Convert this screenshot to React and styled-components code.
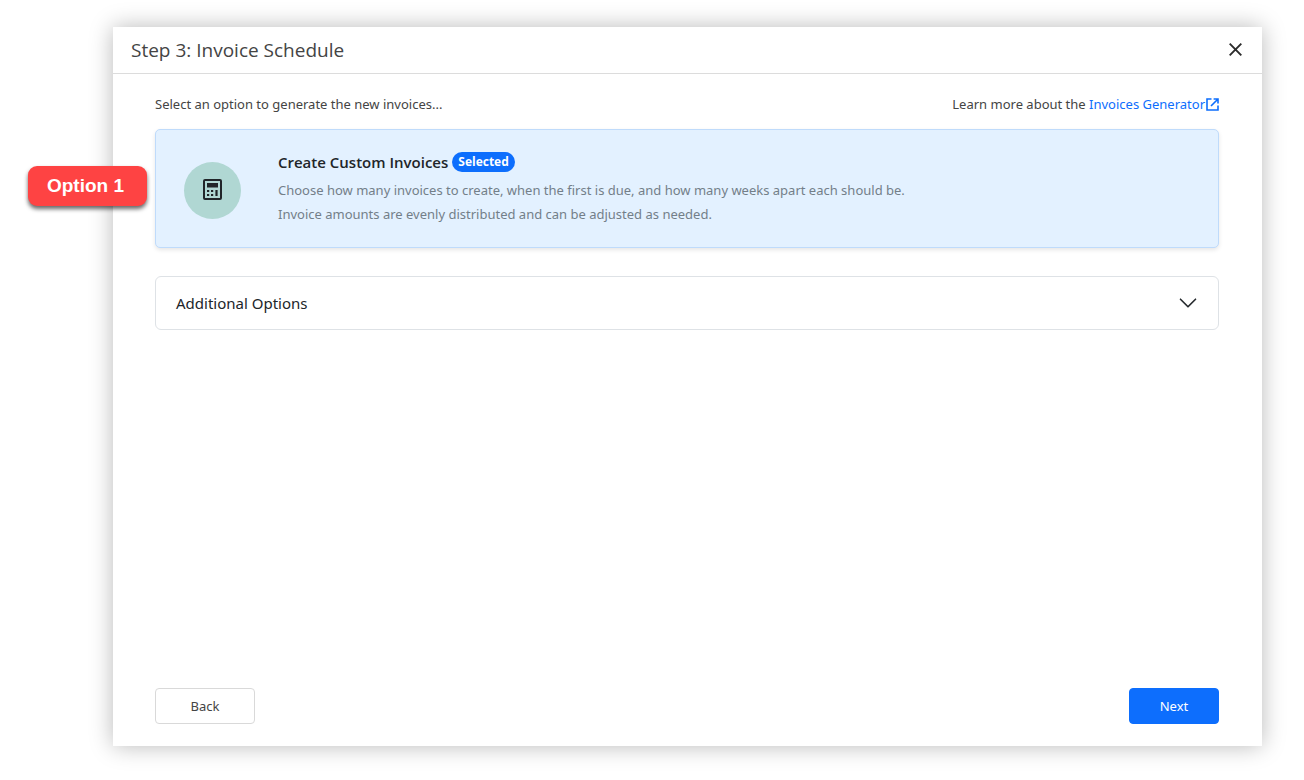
import React, { useState } from "react";
import styled, { createGlobalStyle } from "styled-components";

const headingFont = '"Segoe UI", "Open Sans", sans-serif'
const bodyFont = '"Segoe UI", "Noto Sans", sans-serif'

const CalculatorIcon = () => (
    <svg width="19" height="21" viewBox="0 0 19 21" fill="#212529" aria-hidden="true">
        <rect x="1" y="1" width="17" height="19" rx="1" fill="none" stroke="#212529" strokeWidth="2" />
        <rect x="4" y="4" width="11" height="4.5" />
        <rect x="4" y="11" width="2.2" height="2" />
        <rect x="8" y="11" width="2.2" height="2" />
        <rect x="12.4" y="11" width="2.2" height="6" />
        <rect x="4" y="15" width="2.2" height="2" />
        <rect x="8" y="15" width="2.2" height="2" />
    </svg>
)

const ExternalIcon = () => (
    <svg width="13" height="13" viewBox="0 0 13 13" fill="none" stroke="currentColor" strokeWidth="1.6" aria-hidden="true">
        <path d="M5.5 1H1v11h11V7.5" />
        <path d="M7.6 1H12v4.4M12 1L5 8" />
    </svg>
)

const CloseIcon = () => (
    <svg width="13" height="13" viewBox="0 0 13 13" fill="none" stroke="#2b2b2b" strokeWidth="1.9" aria-hidden="true">
        <path d="M.7.7l11.6 11.6M12.3.7L.7 12.3" />
    </svg>
)

const ChevronIcon = ({ open }) => (
    <StyledChevron width="20" height="20" viewBox="0 0 16 16" fill="#212529" $open={open} aria-hidden="true">
        <path
            fillRule="evenodd"
            stroke="#212529"
            strokeWidth=".2"
            d="M1.646 4.646a.5.5 0 0 1 .708 0L8 10.293l5.646-5.647a.5.5 0 0 1 .708.708l-6 6a.5.5 0 0 1-.708 0l-6-6a.5.5 0 0 1 0-.708z"
        />
    </StyledChevron>
)

const App = () => {
    const [ expanded, setExpanded ] = useState(false)

    return (
        <StyledPage>
            <GlobalStyle />
            <StyledModal role="dialog" aria-labelledby="modal-title">
                <StyledHeader>
                    <StyledTitle id="modal-title">Step 3: Invoice Schedule</StyledTitle>
                    <StyledClose type="button" aria-label="Close">
                        <CloseIcon />
                    </StyledClose>
                </StyledHeader>
                <StyledBody>
                    <StyledIntro>
                        <span>Select an option to generate the new invoices...</span>
                        <span>
                            Learn more about the{' '}
                            <StyledLink href="#invoices-generator">
                                Invoices Generator
                                <ExternalIcon />
                            </StyledLink>
                        </span>
                    </StyledIntro>
                    <StyledOption>
                        <StyledCallout>Option 1</StyledCallout>
                        <StyledIconCircle>
                            <CalculatorIcon />
                        </StyledIconCircle>
                        <div>
                            <StyledOptionTitle>
                                Create Custom Invoices
                                <StyledBadge>Selected</StyledBadge>
                            </StyledOptionTitle>
                            <StyledOptionText>
                                Choose how many invoices to create, when the first is due, and how many weeks apart each should be.
                                <br />
                                Invoice amounts are evenly distributed and can be adjusted as needed.
                            </StyledOptionText>
                        </div>
                    </StyledOption>
                    <StyledAccordion type="button" aria-expanded={expanded} onClick={() => setExpanded(!expanded)}>
                        Additional Options
                        <ChevronIcon open={expanded} />
                    </StyledAccordion>
                </StyledBody>
                <StyledFooter>
                    <StyledButton type="button" $width="100px">Back</StyledButton>
                    <StyledButton type="button" $width="90px" $primary>Next</StyledButton>
                </StyledFooter>
            </StyledModal>
        </StyledPage>
    )
}

export default App

const GlobalStyle = createGlobalStyle`
    *, *::before, *::after {
        box-sizing: border-box;
    }

    body {
        margin: 0;
        background-color: #fff;
        color: #444;
        font-family: ${bodyFont};
        font-size: 13px;
        line-height: 24px;
    }

    button {
        font-family: inherit;
        cursor: pointer;
    }
`

const StyledPage = styled.main`
    display: flex;
    min-height: 100vh;
    padding: 27px 42px 34px 113px;
`

const StyledModal = styled.section`
    display: flex;
    flex-direction: column;
    flex: 1;
    background-color: #fff;
    box-shadow: 0 0 22px rgba(0, 0, 0, 0.28);
`

const StyledHeader = styled.header`
    display: flex;
    justify-content: space-between;
    align-items: center;
    height: 47px;
    padding: 0 18px;
    border-bottom: 1px solid #dcdcdc;
`

const StyledTitle = styled.h1`
    margin: 0;
    font-family: ${headingFont};
    font-size: 19px;
    font-weight: 400;
`

const StyledClose = styled.button`
    display: flex;
    padding: 2px 2px 4px;
    border: none;
    background-color: transparent;
`

const StyledBody = styled.div`
    flex: 1;
    padding: 18px 43px 0 42px;
`

const StyledIntro = styled.div`
    display: flex;
    justify-content: space-between;
    margin-bottom: 13px;
`

const StyledLink = styled.a`
    display: inline-flex;
    align-items: center;
    gap: 1px;
    color: #0d6efd;
    text-decoration: none;
`

const StyledOption = styled.div`
    position: relative;
    display: flex;
    align-items: flex-start;
    gap: 37px;
    margin-bottom: 28px;
    padding: 20px 28px 21px;
    border: 1px solid #bfdbfb;
    border-radius: 5px;
    background-color: #e3f1ff;
    box-shadow: 0 2px 4px rgba(0, 0, 0, 0.1);
`

const StyledCallout = styled.div`
    position: absolute;
    top: 36px;
    left: -128px;
    width: 119px;
    padding-right: 4px;
    border-radius: 9px;
    background-color: #fe4343;
    box-shadow: 0 3px 4px rgba(0, 0, 0, 0.6);
    color: #fff;
    font-family: "Liberation Sans", sans-serif;
    font-size: 19px;
    font-weight: 700;
    line-height: 40px;
    text-align: center;
`

const StyledIconCircle = styled.div`
    display: flex;
    justify-content: center;
    align-items: center;
    width: 57px;
    height: 57px;
    margin-top: 12px;
    padding-bottom: 2px;
    border-radius: 50%;
    background-color: #b0d7d3;
`

const StyledOptionTitle = styled.h2`
    display: flex;
    align-items: center;
    gap: 4px;
    margin: 0 0 4px;
    color: #212529;
    font-family: ${headingFont};
    font-size: 15px;
    font-weight: 600;
`

const StyledBadge = styled.span`
    padding: 0 6px;
    border-radius: 10px;
    background-color: #0d6efd;
    color: #fff;
    font-size: 12px;
    font-weight: 700;
    line-height: 20px;
`

const StyledOptionText = styled.p`
    margin: 0;
    color: #737f89;
`

const StyledAccordion = styled.button`
    display: flex;
    justify-content: space-between;
    align-items: center;
    width: 100%;
    height: 54px;
    padding: 0 20px;
    border: 1px solid #dee2e6;
    border-radius: 6px;
    background-color: #fff;
    color: #212529;
    font-size: 15px;
`

const StyledChevron = styled.svg`
    transform: ${({$open}) => $open ? 'rotate(180deg)' : 'none'};
`

const StyledFooter = styled.footer`
    display: flex;
    justify-content: space-between;
    padding: 22px 43px 22px 42px;
`

const StyledButton = styled.button`
    width: ${({$width}) => $width};
    height: 36px;
    border: 1px solid ${({$primary}) => $primary ? '#0d6efd' : '#d9d9d9'};
    border-radius: 4px;
    background-color: ${({$primary}) => $primary ? '#0d6efd' : '#fff'};
    color: ${({$primary}) => $primary ? '#fff' : '#444'};
    font-size: 13px;
`
